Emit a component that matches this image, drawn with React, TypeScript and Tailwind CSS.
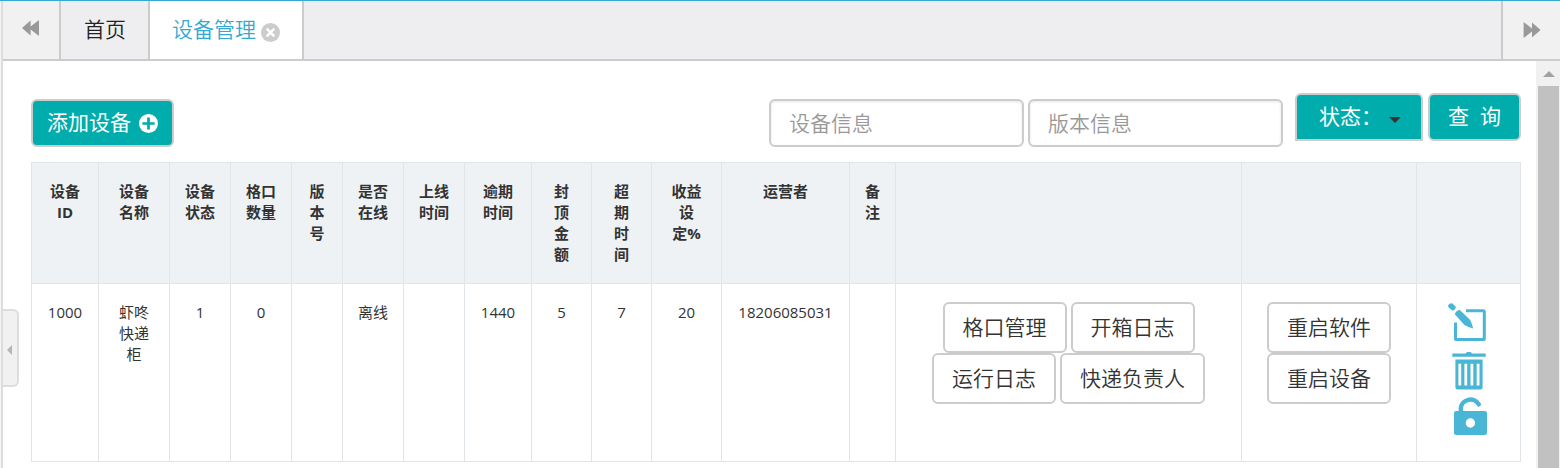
import { useState } from 'react';

interface Column {
  title: string;
  width: string;
}

const columns: Column[] = [
  { title: '设备ID', width: 'w-[67px]' },
  { title: '设备名称', width: 'w-[71px]' },
  { title: '设备状态', width: 'w-[61px]' },
  { title: '格口数量', width: 'w-[61px]' },
  { title: '版本号', width: 'w-[51px]' },
  { title: '是否在线', width: 'w-[61px]' },
  { title: '上线时间', width: 'w-[61px]' },
  { title: '逾期时间', width: 'w-[67px]' },
  { title: '封顶金额', width: 'w-[60px]' },
  { title: '超期时间', width: 'w-[60px]' },
  { title: '收益设定%', width: 'w-[70px]' },
  { title: '运营者', width: 'w-[128px]' },
  { title: '备注', width: 'w-[46px]' },
  { title: '', width: 'w-auto' },
  { title: '', width: 'w-[175px]' },
  { title: '', width: 'w-[104px]' },
];

const devices = [
  ['1000', '虾咚快递柜', '1', '0', '', '离线', '', '1440', '5', '7', '20', '18206085031', ''],
];

const cell = 'border border-[#e0e5e9] px-[15px] py-[18px] text-center align-top';

const RowButton = ({ label }: { label: string }) => (
  <button
    type="button"
    className="h-[51px] rounded-md border-2 border-[#ccc] bg-white px-[18px] text-[21px] font-[350] text-[#333] hover:bg-gray-50"
  >
    {label}
  </button>
);

const PlusCircleIcon = () => (
  <svg viewBox="0 0 18 18" className="size-[19px]">
    <circle cx="9" cy="9" r="9" fill="#fff" />
    <path d="M9 3.2V14.8M3.2 9H14.8" stroke="#00acac" strokeWidth="2.6" />
  </svg>
);

const CloseCircleIcon = () => (
  <svg viewBox="0 0 18 18" className="size-[19px]">
    <circle cx="9" cy="9" r="9" fill="#ccc" />
    <path d="M5.4 5.4L12.6 12.6M12.6 5.4L5.4 12.6" stroke="#fff" strokeWidth="2.4" />
  </svg>
);

const EditIcon = () => (
  <svg viewBox="0 0 40 47" className="h-[47px] w-10" fill="#4ab6d6">
    <path
      d="M18 8.8H35.2Q36.3 8.8 36.3 9.9V36.5Q36.3 37.6 35.2 37.6H8.6Q7.5 37.6 7.5 36.5V20.5"
      fill="none"
      stroke="#4ab6d6"
      strokeWidth="3"
    />
    <path d="M0 3.6Q1.2 1 4.2 1.2L7.8 4.8Q7.9 7.4 4.8 8.8L.6 5.4Z" />
    <path d="M6.6 12Q8 8.8 11.6 7.8L22 17.8Q24 21.6 25.2 26.4Q20.4 25.4 16.4 23Z" />
  </svg>
);

const TrashIcon = () => (
  <svg viewBox="0 0 40 47" className="h-[47px] w-10" fill="#4ab6d6">
    <path d="M4.3 4.5H17.6Q18 3 19.6 3H22Q23.6 3 24 4.5H37.7V7.8H4.3Z" />
    <path
      fillRule="evenodd"
      d="M7.4 10.4H34.6V38.6Q34.6 40.6 32.6 40.6H9.4Q7.4 40.6 7.4 38.6ZM10.4 14.8V36.4H13.2V14.8ZM16.4 14.8V36.4H19.2V14.8ZM22.5 14.8V36.4H25.3V14.8ZM28.7 14.8V36.4H31.5V14.8Z"
    />
  </svg>
);

const UnlockIcon = () => (
  <svg viewBox="0 0 40 47" className="h-[47px] w-10" fill="#4ab6d6">
    <path
      d="M12.8 17V12.6A9.6 9.4 0 0 1 30.8 8.4"
      fill="none"
      stroke="#4ab6d6"
      strokeWidth="4.4"
      strokeLinecap="round"
    />
    <path
      fillRule="evenodd"
      d="M8.2 15H36.8Q39 15 39 17.2V36.8Q39 39 36.8 39H8.2Q6 39 6 36.8V17.2Q6 15 8.2 15ZM22.4 22.3A4.7 4.7 0 1 0 22.4 31.7A4.7 4.7 0 1 0 22.4 22.3Z"
    />
  </svg>
);

const TabBar = () => (
  <nav className="flex h-[60px] border-b-2 border-[#ccc] bg-[#eeeef0] text-[21px] font-[350]">
    <button
      type="button"
      aria-label="向左滚动"
      className="flex w-[58px] items-center justify-center border-r-2 border-[#ccc] bg-[#f1f1f1] pb-1"
    >
      <svg viewBox="0 0 18 16" className="h-4 w-[18px]" fill="#999">
        <path d="M0 8L8.6 .4V6.6L17 0V16L8.6 9.4V15.6Z" />
      </svg>
    </button>
    <a href="#home" className="flex items-center border-r-2 border-[#ccc] pr-[22px] pl-[23px] text-[#222]">
      首页
    </a>
    <div className="flex items-center gap-[5px] border-r-2 border-[#ccc] bg-white px-[22px] text-[#35a9cf]">
      <a href="#devices">设备管理</a>
      <button type="button" aria-label="关闭" className="pt-1">
        <CloseCircleIcon />
      </button>
    </div>
    <button
      type="button"
      aria-label="向右滚动"
      className="ml-auto flex w-[59px] items-center justify-center border-l-2 border-[#ccc] bg-[#f1f1f1]"
    >
      <svg viewBox="0 0 18 16" className="h-4 w-[18px]" fill="#999">
        <path d="M17.6 8L9 .4V6.6L.6 0V16L9 9.4V15.6Z" />
      </svg>
    </button>
  </nav>
);

const Toolbar = () => {
  const [status, setStatus] = useState('');
  const input =
    'h-12 w-[255px] rounded-md border-2 border-[#ccc] bg-white px-[18px] font-[350] text-[#555] shadow-[inset_0_1px_3px_rgba(0,0,0,0.1)] outline-none placeholder:text-[#999]';

  return (
    <div className="flex items-start justify-between text-[21px]">
      <div className="pt-1.5">
        <button
          type="button"
          className="flex h-12 items-center gap-2 rounded-md border-2 border-[#ccc] bg-[#00acac] px-3.5 text-white"
        >
          添加设备
          <PlusCircleIcon />
        </button>
      </div>
      <div className="flex items-start gap-3">
        <div className="flex gap-1 pt-1.5">
          <input type="text" aria-label="设备信息" placeholder="设备信息" className={input} />
          <input type="text" aria-label="版本信息" placeholder="版本信息" className={input} />
        </div>
        <div className="flex gap-[5px]">
          <div className="relative">
            <select
              aria-label="状态"
              value={status}
              onChange={(e) => setStatus(e.target.value)}
              className="h-12 w-32 appearance-none rounded-t-md border-2 border-[#ccc] bg-[#00acac] pl-[22px] text-white outline-none"
            >
              <option value="">状态：</option>
              <option value="online">在线</option>
              <option value="offline">离线</option>
            </select>
            <svg viewBox="0 0 12 6" className="pointer-events-none absolute top-6 right-[22px] h-1.5 w-3" fill="#333">
              <path d="M0 0H12L6 6Z" />
            </svg>
          </div>
          <button
            type="button"
            className="h-12 w-[93px] rounded-md border-2 border-[#ccc] bg-[#00acac] text-white"
          >
            查&nbsp;&nbsp;询
          </button>
        </div>
      </div>
    </div>
  );
};

const DeviceTable = () => (
  <table className="w-full table-fixed border-collapse text-[15px] leading-[21px] text-[#333]">
    <thead>
      <tr className="bg-[#eef2f5]">
        {columns.map((column, index) => (
          <th key={index} scope="col" className={`${cell} ${column.width} font-bold`}>
            {column.title}
          </th>
        ))}
      </tr>
    </thead>
    <tbody>
      {devices.map((device) => (
        <tr key={device[0]}>
          {device.map((value, index) => (
            <td key={index} className={cell}>
              {value}
            </td>
          ))}
          <td className={cell}>
            <div className="flex flex-wrap justify-center gap-x-1">
              <RowButton label="格口管理" />
              <RowButton label="开箱日志" />
              <RowButton label="运行日志" />
              <RowButton label="快递负责人" />
            </div>
          </td>
          <td className={cell}>
            <div className="flex flex-wrap justify-center gap-x-1">
              <RowButton label="重启软件" />
              <RowButton label="重启设备" />
            </div>
          </td>
          <td className={cell}>
            <div className="flex flex-col items-center pr-0.5">
              <button type="button" aria-label="编辑">
                <EditIcon />
              </button>
              <button type="button" aria-label="删除">
                <TrashIcon />
              </button>
              <button type="button" aria-label="解锁">
                <UnlockIcon />
              </button>
            </div>
          </td>
        </tr>
      ))}
    </tbody>
  </table>
);

const App = () => (
  <div className="flex min-h-screen flex-col border-t border-[#35a9cf] bg-white font-['Open_Sans','Noto_Sans_CJK_SC',sans-serif]">
    <div className="flex grow">
      {/* Sidebar edge with its collapse handle */}
      <aside className="relative w-[3px] shrink-0 border-r-2 border-[#ddd] bg-[#f5f5f5]">
        <button
          type="button"
          aria-label="收起菜单"
          className="absolute top-[308px] left-[3px] flex h-[78px] w-4 items-center rounded-r-md border-2 border-l-0 border-[#ddd] bg-[#f1f1f1] pt-1 pl-1"
        >
          <svg viewBox="0 0 5 10" className="h-2.5 w-[5px]" fill="#b5b5b5">
            <path d="M5 0V10L0 5Z" />
          </svg>
        </button>
      </aside>

      <div className="flex min-w-0 grow flex-col">
        <TabBar />
        <div className="flex grow">
          <main className="flex min-w-0 grow flex-col gap-[15px] pt-8 pr-[15px] pl-7">
            <Toolbar />
            <DeviceTable />
          </main>
          {/* Scrollbar */}
          <div className="flex w-6 shrink-0 flex-col bg-[#f1f1f1] pr-px pl-0.5">
            <div className="flex h-[25px] items-center justify-center">
              <svg viewBox="0 0 12 6" className="h-1.5 w-3" fill="#a3a3a3">
                <path d="M6 0L12 6H0Z" />
              </svg>
            </div>
            <div className="grow bg-[#c1c1c1]" />
          </div>
        </div>
      </div>
    </div>
  </div>
);

export default App;
